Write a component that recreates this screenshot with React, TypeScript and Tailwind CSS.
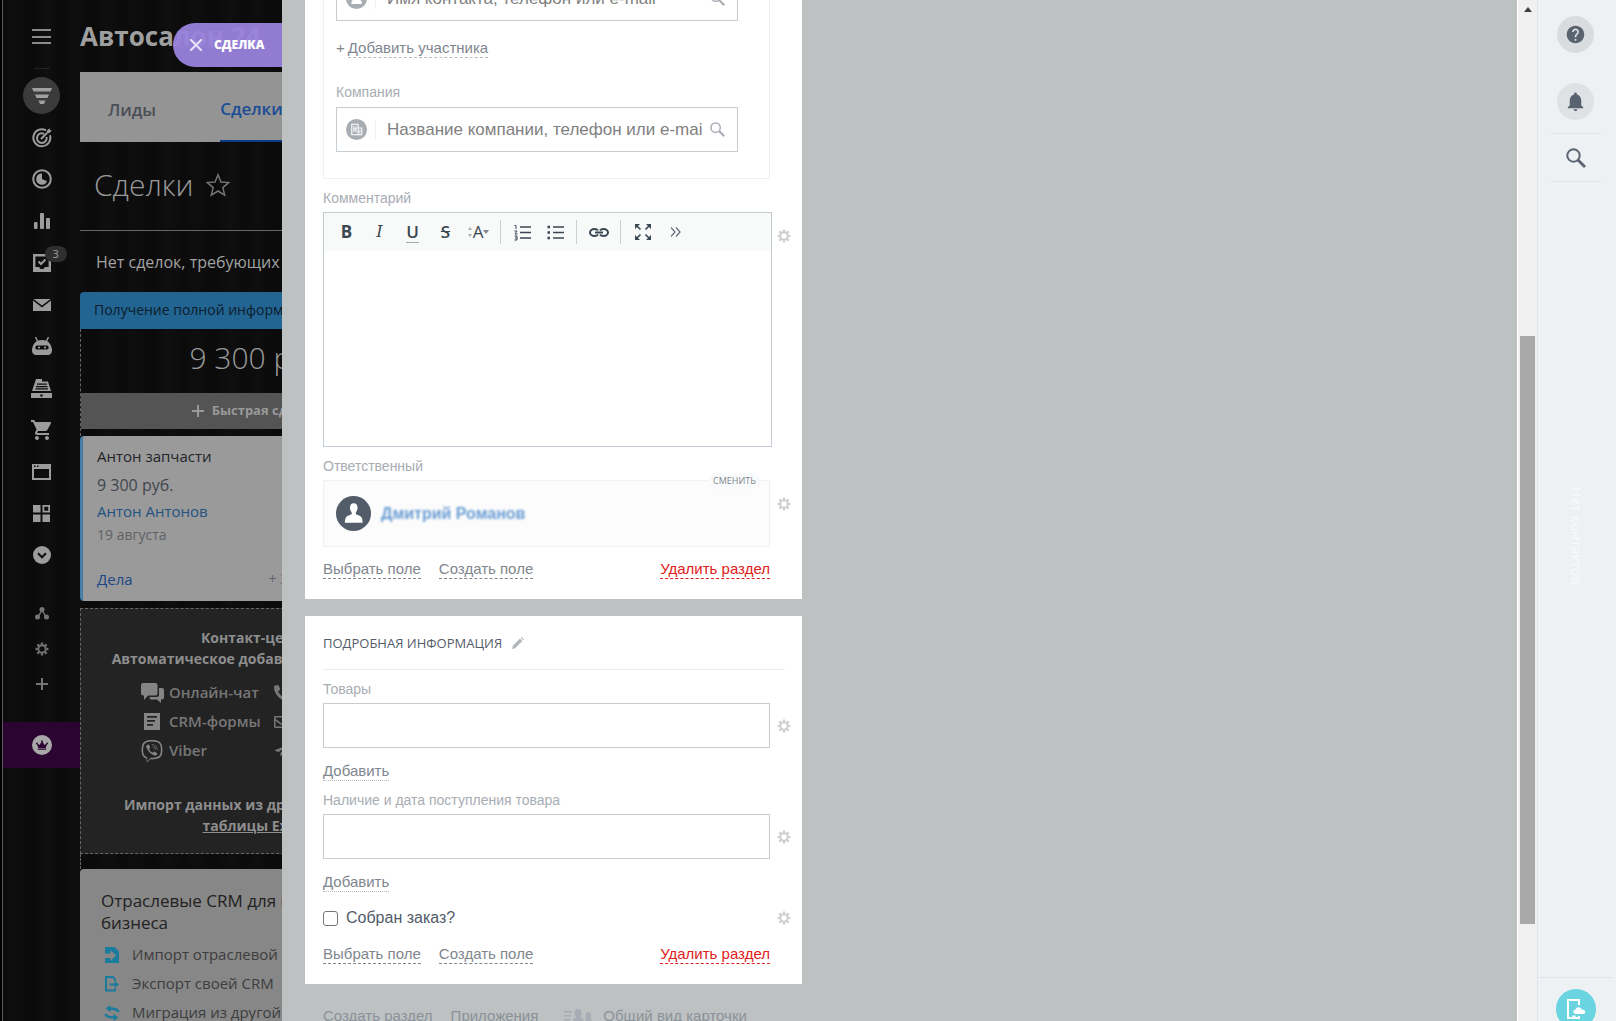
import type { ReactNode } from 'react';
import { FaCrown, FaPhone, FaRegEnvelope, FaTelegramPlane, FaViber } from 'react-icons/fa';
import { MdHelp, MdNotifications, MdShoppingCart } from 'react-icons/md';

type IconProps = {
    className?: string;
};

function Gear({ className }: IconProps) {
    return (
        <svg viewBox="0 0 16 16" className={className} fill="none" stroke="currentColor">
            <circle cx="8" cy="8" r="4.2" strokeWidth="2.2" />
            {[0, 45, 90, 135, 180, 225, 270, 315].map((deg) => (
                <path key={deg} d="M8 3V0.6" strokeWidth="2.6" transform={`rotate(${deg} 8 8)`} />
            ))}
        </svg>
    );
}

function SearchIcon({ className }: IconProps) {
    return (
        <svg viewBox="0 0 20 20" className={className} fill="none" stroke="currentColor">
            <circle cx="7.5" cy="7.5" r="6.2" strokeWidth="2" />
            <path d="M12 12l7 7" strokeWidth="2.8" />
        </svg>
    );
}

function Person({ className }: IconProps) {
    return (
        <svg viewBox="0 0 36 36" className={className}>
            <circle cx="18" cy="18" r="18" fill="currentColor" />
            <path
                d="M18.3 7.5c2.6 0 3.9 1.8 3.9 4.2 0 2.4-.9 4-1.8 5v2.100c3.700 1.200 6 2.400 6.500 4.600l.5 4.200H9l.6-4.200c.5-2.200 2.800-3.400 6.500-4.600v-2.100c-.9-1-1.700-2.600-1.700-5 0-2.400 1.300-4.200 3.900-4.200z"
                fill="#fff"
            />
        </svg>
    );
}

function CompanyIcon({ className }: IconProps) {
    return (
        <svg viewBox="0 0 20 20" className={className} fill="none" stroke="#fff">
            <circle cx="10" cy="10" r="10" fill="currentColor" stroke="none" />
            <path d="M5.500 15V5h6v10zM11.500 8.500h3.500V15h-10M7.500 7v5.500M9.500 7v5.500M7.500 9.500h2M13.200 10.500v3" />
        </svg>
    );
}

const menuIcons: { name: string; icon: ReactNode }[] = [
    {
        name: 'CRM',
        icon: (
            <span className="flex size-[37px] items-center justify-center rounded-full bg-[#3b3b3b]">
                <svg viewBox="0 0 20 16" className="h-4 w-5" fill="#a0a0a0">
                    <path d="M0 0h20l-1.500 3.500h-17zM3 6.500h14l-1.500 3.500h-11zM6.500 12.500h7L12 16H8z" />
                </svg>
            </span>
        ),
    },
    {
        name: 'Задачи',
        icon: (
            <svg viewBox="0 0 20 20" className="size-5" fill="none" stroke="currentColor" strokeWidth="2">
                <path d="M14 2.300a8.500 8.500 0 1 0 4 5M12 5.800a4.800 4.800 0 1 0 2.500 3.200M9 11l6-6" />
                <path d="M14.500 5.500l.5-3 2.500-2.200.5 1.700 1.700.5-2.200 2.500z" fill="currentColor" stroke="none" />
            </svg>
        ),
    },
    {
        name: 'Время',
        icon: (
            <svg viewBox="0 0 20 20" className="size-5" fill="none" stroke="currentColor" strokeWidth="2">
                <circle cx="10" cy="10" r="8.800" />
                <path d="M10 4.500V10l5 2.200A5.600 5.600 0 1 1 10 4.500z" fill="currentColor" stroke="none" />
            </svg>
        ),
    },
    {
        name: 'Аналитика',
        icon: (
            <svg viewBox="0 0 16 16" className="size-4" fill="currentColor">
                <rect y="9" width="3.500" height="7" rx="1" />
                <rect x="6" width="4" height="16" rx="1" />
                <rect x="12" y="5" width="4" height="11" rx="1" />
            </svg>
        ),
    },
    {
        name: 'Дела',
        icon: (
            <span className="relative">
                <svg viewBox="0 0 18 18" className="size-[18px]" fill="none" stroke="currentColor">
                    <path d="M1.200 1.200h15.600v15.600H1.200z" strokeWidth="2.400" />
                    <path d="M2 13h4l1.500 2h3L12 13h4v4H2z" fill="currentColor" stroke="none" />
                    <path d="M5.500 7.500l2.500 2.500 4.500-4.500" strokeWidth="2" />
                </svg>
                <span className="absolute -top-2 left-3 rounded-full bg-[#2f2f2f] px-2 font-['Open_Sans',sans-serif] text-[11px] leading-4 text-[#a0a0a0]">
                    3
                </span>
            </span>
        ),
    },
    {
        name: 'Почта',
        icon: (
            <svg viewBox="0 0 18 12" className="h-3 w-[18px]" fill="currentColor">
                <path d="M.5 0h17L9 6.500zM0 1.500l9 7 9-7V12H0z" />
            </svg>
        ),
    },
    {
        name: 'Роботы',
        icon: (
            <svg viewBox="0 0 20 18" className="h-[18px] w-5" fill="currentColor">
                <path d="M3.500 0l2 4M16.500 0l-2 4" stroke="currentColor" strokeWidth="1.400" />
                <path
                    d="M10 3c5.500 0 9 3 10 9.500.2 3.500-1.500 5.500-4 5.500H4c-2.500 0-4.200-2-4-5.500C1 6 4.500 3 10 3zM5 8.500c-2.200 0-2.200 4 0 4h10c2.200 0 2.200-4 0-4z"
                    fillRule="evenodd"
                />
                <circle cx="7" cy="10.500" r="1.100" />
                <circle cx="13" cy="10.500" r="1.100" />
            </svg>
        ),
    },
    {
        name: 'Касса',
        icon: (
            <svg viewBox="0 0 21 20" className="h-5 w-[21px]" fill="currentColor">
                <path
                    d="M5 1h6v2.500h6L20 13H1zM6 5.500v1.300h10V5.500zM5 8v1.200h11.500V8zM4.500 10.300v1.200H17v-1.200zM0 15h21v5H0zm9.200 1.500v2h2.500v-2z"
                    fillRule="evenodd"
                />
            </svg>
        ),
    },
    { name: 'Магазин', icon: <MdShoppingCart className="size-6" /> },
    {
        name: 'Сайты',
        icon: (
            <svg viewBox="0 0 19 16" className="h-4 w-[19px]" fill="currentColor">
                <path d="M0 0h19v16H0zM2 5v9h15V5zM2 1.500V3h1.500V1.500zM5 1.500V3h1.500V1.500z" fillRule="evenodd" />
            </svg>
        ),
    },
    {
        name: 'Маркет',
        icon: (
            <svg viewBox="0 0 17 17" className="size-[17px]" fill="currentColor">
                <path d="M0 0h7.500v7.500H0zM9.500 0H17v7.500H9.500zM11.300 1.800v3.900h3.900V1.800zM0 9.500h7.500V17H0zM9.500 9.500H17V17H9.500z" fillRule="evenodd" />
            </svg>
        ),
    },
    {
        name: 'Ещё',
        icon: (
            <svg viewBox="0 0 18 18" className="size-[18px]">
                <circle cx="9" cy="9" r="9" fill="currentColor" />
                <path d="M5 7.200l4 4 4-4" fill="none" stroke="#111" strokeWidth="2.200" />
            </svg>
        ),
    },
];

function Sidebar() {
    return (
        <nav className="flex w-[77px] shrink-0 flex-col items-center text-[#9c9c9c]">
            <button aria-label="Меню" className="mt-[29px] flex h-[15px] w-[19px] flex-col justify-between">
                <span className="h-[2px] w-full bg-[#8a8a8a]" />
                <span className="h-[2px] w-full bg-[#8a8a8a]" />
                <span className="h-[2px] w-full bg-[#8a8a8a]" />
            </button>
            <span className="mt-6 h-px w-4 bg-[#242424]" />
            <div className="mt-[6px] grid h-[501px] shrink-0 auto-rows-fr">
                {menuIcons.map((item) => (
                    <button key={item.name} aria-label={item.name} className="flex items-center justify-center">
                        {item.icon}
                    </button>
                ))}
            </div>
            <div className="mt-5 flex flex-col items-center text-[#757575]">
                <button aria-label="Карта сайта" className="flex h-[35px] items-center">
                    <svg viewBox="0 0 14 13" className="h-[13px] w-[14px]" fill="currentColor">
                        <path d="M7 3L3 10M7 3l4 7" stroke="currentColor" strokeWidth="1.500" />
                        <circle cx="7" cy="2.500" r="2.500" />
                        <circle cx="2.500" cy="10" r="2.500" />
                        <circle cx="11.500" cy="10" r="2.500" />
                    </svg>
                </button>
                <button aria-label="Настройки" className="flex h-[35px] items-center">
                    <Gear className="size-[14px]" />
                </button>
                <button aria-label="Добавить пункт" className="flex h-[35px] items-center">
                    <svg viewBox="0 0 12 12" className="size-3" stroke="currentColor" strokeWidth="2">
                        <path d="M6 0v12M0 6h12" />
                    </svg>
                </button>
            </div>
            <button aria-label="Тариф" className="mt-[21px] flex h-[46px] w-full items-center justify-center bg-[#2c0432]">
                <span className="flex size-5 items-center justify-center rounded-full bg-[#a8a8a8]">
                    <FaCrown className="size-3 text-[#2c0432]" />
                </span>
            </button>
        </nav>
    );
}

function Channel({ icon, label, next }: { icon: ReactNode; label: string; next: ReactNode }) {
    return (
        <li className="flex h-[29px] items-center pl-[60px]">
            <span className="flex w-7 items-center text-[#858585]">{icon}</span>
            <span className="w-[105px]">{label}</span>
            {next}
        </li>
    );
}

function Deals() {
    return (
        <div className="flex w-[202px] shrink-0 flex-col overflow-hidden font-['Open_Sans','Noto_Sans',sans-serif] whitespace-nowrap">
            <h1 className="mt-[18px] h-9 shrink-0 text-[26px] leading-9 font-bold text-[#9f9f9f]">Автосалон 24</h1>
            <div className="mt-[18px] flex h-[70px] shrink-0 items-stretch gap-16 bg-[#949494] pl-7 text-[17px] font-semibold">
                <a href="#leads" className="flex items-center pt-[6px] text-[#4a4e56]">
                    Лиды
                </a>
                <a href="#deals" className="flex items-center border-b-2 border-[#0c3c88] pt-[6px] pr-4 text-[#1b4d96]">
                    Сделки
                </a>
            </div>
            <div className="mt-[23px] flex h-10 shrink-0 items-center gap-3 pl-[14px] text-[#9a9a9a]">
                <h2 className="text-[30px] leading-10 font-light">Сделки</h2>
                <svg viewBox="0 0 24 24" className="size-6" fill="none" stroke="#747474" strokeWidth="1.500">
                    <path d="M12 1.800l3 7.200 7.700.6-5.900 5 1.900 7.500L12 18l-6.700 4.100 1.900-7.500-5.900-5L9 9z" />
                </svg>
            </div>
            <p className="mt-[25px] h-[62px] shrink-0 border-t border-[#666] pt-[19px] pl-4 text-[16px] leading-6 text-[#a2a2a2]">
                Нет сделок, требующих внимания
            </p>
            <div className="w-[350px]">
                <div className="h-[37px] rounded-t bg-[#226593] pl-[14px] text-[14px] leading-9 font-medium text-[#0c1c2a]">Получение полной информации</div>
                <div className="border-l border-dashed border-[#666]">
                    <p className="h-16 pl-2 text-center text-[30px] leading-[58px] font-light text-[#9a9a9a]">9 300 руб.</p>
                    <button className="flex h-9 w-full items-center justify-center gap-2 bg-[#545454] text-[13px] font-bold text-[#999]">
                        <svg viewBox="0 0 12 12" className="size-3" stroke="currentColor" strokeWidth="2">
                            <path d="M6 0v12M0 6h12" />
                        </svg>
                        Быстрая сделка
                    </button>
                    <div className="h-[7px]" />
                </div>
                <article className="h-[165px] rounded-l-sm border-l-[3px] border-[#457fa8] bg-[#9a9a9a] pt-2 pl-[14px]">
                    <p className="text-[15px] leading-6 font-medium text-[#232529]">Антон запчасти</p>
                    <p className="mt-[3px] text-[16px] leading-7 text-[#42464d]">9 300 руб.</p>
                    <a href="#contact" className="block text-[15px] leading-6 text-[#22527f]">
                        Антон Антонов
                    </a>
                    <p className="text-[14px] leading-6 text-[#5f6266]">19 августа</p>
                    <div className="mt-5 flex items-center gap-[136px] leading-6">
                        <a href="#todo" className="text-[15px] text-[#1b4687]">
                            Дела
                        </a>
                        <span className="text-[14px] text-[#5f6266]">+ Запланировать</span>
                    </div>
                </article>
                <div className="h-[7px]" />
                <section className="h-[246px] border border-dashed border-[#666] bg-[#232323] pt-[18px] text-[14px] font-bold text-[#8e8e8e]">
                    <p className="text-center leading-[21px]">
                        Контакт-центр
                        <br />
                        Автоматическое добавление лидов из
                    </p>
                    <ul className="mt-[9px] text-[15px] font-semibold text-[#777]">
                        <Channel
                            icon={
                                <svg viewBox="0 0 23 20" className="h-5 w-[23px]" fill="currentColor">
                                    <path d="M2 0h12.500a2 2 0 0 1 2 2v8.500a2 2 0 0 1-2 2H7L3 17v-4.500H2a2 2 0 0 1-2-2V2a2 2 0 0 1 2-2z" />
                                    <path d="M18 5h3a2 2 0 0 1 2 2v7.500a2 2 0 0 1-2 2h-1V20l-4-3.500h-5.500a1.500 1.500 0 0 1-1.500-2.500h6.500a2.500 2.500 0 0 0 2.500-2.500z" />
                                </svg>
                            }
                            label="Онлайн-чат"
                            next={<FaPhone className="size-4 -scale-x-100" />}
                        />
                        <Channel
                            icon={
                                <svg viewBox="0 0 16 17" className="ml-[3px] h-[17px] w-4" fill="currentColor">
                                    <path d="M0 0h16v17H0zM3 3v1.800h10V3zM3 7v1.800h8V7zM3 11v1.800h6V11z" fillRule="evenodd" />
                                </svg>
                            }
                            label="CRM-формы"
                            next={<FaRegEnvelope className="size-4" />}
                        />
                        <Channel icon={<FaViber className="size-[22px]" />} label="Viber" next={<FaTelegramPlane className="size-4" />} />
                    </ul>
                    <p className="mt-[29px] text-center leading-[21px]">
                        Импорт данных из другой CRM или
                        <br />
                        <a href="#excel" className="underline">
                            таблицы Excel
                        </a>
                    </p>
                </section>
                <div className="h-[15px] border-l border-dashed border-[#666]" />
                <section className="h-[200px] rounded-t bg-[#878787] pt-[21px] pl-[21px]">
                    <h3 className="text-[17px] leading-[22px] text-[#222]">
                        Отраслевые CRM для вашего
                        <br />
                        бизнеса
                    </h3>
                    <ul className="mt-[6px] text-[15px] text-[#3d3d3d]">
                        <li className="flex h-[29px] items-center gap-[9px]">
                            <svg viewBox="0 0 14 16" className="mx-1 h-4 w-[14px] text-[#197c9c]" fill="currentColor">
                                <path d="M0 0h9.500L14 4.500V16H0v-5h5.500v3L11 8 5.500 3.500V6.500H0z" />
                            </svg>
                            Импорт отраслевой CRM
                        </li>
                        <li className="flex h-[29px] items-center gap-[9px]">
                            <svg viewBox="0 0 14 16" className="mx-1 h-4 w-[14px] text-[#197c9c]" fill="none" stroke="currentColor" strokeWidth="2">
                                <path d="M10 5V3.500L8 1H1v13.500h9V12M4.500 8.500H11" />
                                <path d="M9.500 5l4.500 3.500-4.500 3.500z" fill="currentColor" stroke="none" />
                            </svg>
                            Экспорт своей CRM
                        </li>
                        <li className="flex h-[29px] items-center gap-[9px]">
                            <svg viewBox="0 0 16 16" className="mx-[3px] size-4 text-[#197c9c]" fill="none" stroke="currentColor" strokeWidth="2.400">
                                <path d="M14.500 7C14 4.500 11.500 3.500 5 3.500M1.500 9C2 11.500 4.500 12.500 11 12.500" />
                                <path d="M6.500 0v7L1.500 3.500zM9.500 9v7l5-3.500z" fill="currentColor" stroke="none" />
                            </svg>
                            Миграция из другой CRM
                        </li>
                    </ul>
                </section>
            </div>
        </div>
    );
}

function FieldGear() {
    return (
        <button aria-label="Настройки поля" className="shrink-0 text-[#cbcdcf]">
            <Gear className="size-[14px]" />
        </button>
    );
}

function EntityInput({ id, icon, placeholder, label }: { id: string; icon: ReactNode; placeholder: string; label: string }) {
    return (
        <div className="flex h-[45px] items-center border border-[#c6cdd3] pr-3 pl-[9px] text-[#a8adb4]">
            {icon}
            <span className="ml-2 h-5 border-l border-[#eef2f4]" />
            <input
                id={id}
                aria-label={label}
                placeholder={placeholder}
                className="ml-[11px] min-w-0 flex-1 text-[17px] leading-6 text-[#535c69] outline-none placeholder:text-[#808080]"
            />
            <SearchIcon className="ml-2 size-[15px] shrink-0" />
        </div>
    );
}

function SectionLinks() {
    return (
        <div className="flex gap-[18px] pr-[21px] text-[15px] leading-[18px] text-[#80868e]">
            <a href="#select" className="border-b border-dashed border-[#80868e]">
                Выбрать поле
            </a>
            <a href="#create" className="border-b border-dashed border-[#80868e]">
                Создать поле
            </a>
            <a href="#remove" className="ml-auto border-b border-dashed border-[#e02020] text-[#e02020]">
                Удалить раздел
            </a>
        </div>
    );
}

function MultiField({ id, label }: { id: string; label: string }) {
    return (
        <div className="mt-[11px]">
            <label htmlFor={id} className="block text-[14px] leading-4 text-[#a8adb4]">
                {label}
            </label>
            <div className="mt-[6px] flex items-center gap-[7px]">
                <input id={id} className="h-[45px] min-w-0 flex-1 border border-[#c9ccd3] px-3 text-[17px] outline-none" />
                <FieldGear />
            </div>
            <button className="mt-[14px] block border-b border-dotted border-[#b8bcc2] text-[15px] leading-[18px] text-[#80868e]">Добавить</button>
        </div>
    );
}

function Divider() {
    return <span className="h-6 w-px bg-[#c9d0d6]" />;
}

function EditorToolbar() {
    return (
        <div className="flex h-[38px] items-center bg-[#f8faf9] pl-[6px] font-['Open_Sans','Noto_Sans',sans-serif] text-[17px] leading-6 text-[#3a4652]">
            <button className="w-[33px] font-bold">B</button>
            <button className="w-[33px] font-['DejaVu_Serif',serif] text-[16px] italic">I</button>
            <button className="flex w-[33px] justify-center">
                <span className="h-[22px] border-b border-[#a5abb2] leading-[22px] font-semibold">U</span>
            </button>
            <button className="w-[33px] font-semibold line-through">S</button>
            <button className="mr-[5px] flex w-[33px] items-center justify-center">
                <svg viewBox="0 0 4 10" className="mr-px h-[10px] w-1" fill="#a8adb4">
                    <path d="M0 3l2-3 2 3zM0 7l2 3 2-3z" />
                </svg>
                A
                <svg viewBox="0 0 6 4" className="h-1 w-[6px]" fill="#80868e">
                    <path d="M0 0h6L3 4z" />
                </svg>
            </button>
            <Divider />
            <button aria-label="Нумерованный список" className="ml-[5px] flex w-[33px] justify-center">
                <svg viewBox="0 0 17 17" className="size-[17px]" fill="none" stroke="currentColor">
                    <path d="M6 3h11M6 8.500h11M6 14h11" strokeWidth="1.400" />
                    <path d="M.5 1.500H2V5M.5 7H3L1 10h2.500M.5 12H3v4H.5M1 14h2" />
                </svg>
            </button>
            <button aria-label="Маркированный список" className="mr-1 flex w-[33px] justify-center">
                <svg viewBox="0 0 17 17" className="size-[17px]" fill="none" stroke="currentColor">
                    <path d="M6 3h11M6 8.500h11M6 14h11" strokeWidth="1.400" />
                    <path d="M.5 3h2.500M.5 8.500h2.500M.5 14h2.500" strokeWidth="2.400" />
                </svg>
            </button>
            <Divider />
            <button aria-label="Ссылка" className="mx-[5px] flex w-[33px] justify-center">
                <svg viewBox="0 0 20 9" className="h-[9px] w-5" fill="none" stroke="currentColor" strokeWidth="2">
                    <path d="M9 2.500C8.300 1.500 7 1 5.500 1 3 1 1 2.500 1 4.500S3 8 5.500 8C7 8 8.300 7.500 9 6.500M11 2.500C11.700 1.500 13 1 14.500 1 17 1 19 2.500 19 4.500S17 8 14.500 8c-1.500 0-2.800-.5-3.500-1.500M6 4.500h8" />
                </svg>
            </button>
            <Divider />
            <button aria-label="Развернуть" className="ml-[5px] flex w-[33px] justify-center">
                <svg viewBox="0 0 16 16" className="size-4" fill="currentColor" stroke="currentColor">
                    <path d="M0 0h5L0 5zM16 0v5l-5-5zM0 16v-5l5 5zM16 16h-5l5-5z" stroke="none" />
                    <path d="M2 2l3.500 3.500M14 2l-3.500 3.500M2 14l3.500-3.500M14 14l-3.500-3.500" strokeWidth="1.600" />
                </svg>
            </button>
            <button aria-label="Ещё" className="flex w-[33px] justify-center">
                <svg viewBox="0 0 11 10" className="h-[10px] w-[11px]" fill="none" stroke="#6a737d" strokeWidth="1.300">
                    <path d="M1 .5L5 5 1 9.500M6 .5L10 5 6 9.500" />
                </svg>
            </button>
        </div>
    );
}

function DealCard() {
    return (
        <main className="flex min-w-0 flex-1 flex-col overflow-hidden bg-[#bdc1c2] pl-[23px] font-['Liberation_Sans',Arial,sans-serif]">
            <section className="-mt-6 w-full max-w-[497px] shrink-0 bg-white pr-[11px] pb-5 pl-[18px]">
                <div className="mr-[21px] border-x border-b border-[#eef0f4] pr-[31px] pb-[26px] pl-3">
                    <EntityInput
                        id="contact"
                        label="Контакт"
                        icon={<Person className="size-[21px] text-[#a8adb4]" />}
                        placeholder="Имя контакта, телефон или e-mail"
                    />
                    <button className="mt-[18px] flex gap-[3px] text-[15px] leading-[18px] text-[#80868e]">
                        +<span className="border-b border-dashed border-[#b8bcc2]">Добавить участника</span>
                    </button>
                    <label htmlFor="company" className="mt-[26px] mb-[7px] block text-[14px] leading-4 text-[#a8adb4]">
                        Компания
                    </label>
                    <EntityInput
                        id="company"
                        label="Компания"
                        icon={<CompanyIcon className="size-[21px] text-[#a8adb4]" />}
                        placeholder="Название компании, телефон или e-mail"
                    />
                </div>

                <label htmlFor="comment" className="mt-[11px] block text-[14px] leading-4 text-[#a8adb4]">
                    Комментарий
                </label>
                <div className="mt-[6px] flex gap-[5px]">
                    <div className="h-[235px] flex-1 border border-[#c3ccd5]">
                        <EditorToolbar />
                        <textarea id="comment" className="block h-[190px] w-full resize-none p-3 text-[15px] outline-none" />
                    </div>
                    <div className="pt-[14px]">
                        <FieldGear />
                    </div>
                </div>

                <p className="mt-[11px] text-[14px] leading-4 text-[#a8adb4]">Ответственный</p>
                <div className="mt-[6px] mb-[13px] flex gap-[7px]">
                    <div className="relative flex h-[67px] flex-1 items-center gap-[10px] border border-[#f0f1f2] bg-[#fcfcfc] pl-3">
                        <Person className="size-[35px] text-[#535c69]" />
                        <a href="#user" className="text-[16px] font-bold text-[#6a9dd4] blur-[1px]">
                            Дмитрий Романов
                        </a>
                        <button className="absolute -top-2 right-2 rounded-full bg-[#f8fafb] px-[5px] font-['Open_Sans','Noto_Sans',sans-serif] text-[9px] leading-4 text-[#80868e]">
                            СМЕНИТЬ
                        </button>
                    </div>
                    <div className="pt-[14px]">
                        <FieldGear />
                    </div>
                </div>
                <SectionLinks />
            </section>

            <section className="mt-[17px] w-full max-w-[497px] shrink-0 bg-white pt-[17px] pr-[11px] pb-5 pl-[18px]">
                <div className="mr-[6px] flex items-center gap-[10px] border-b border-[#e9eef1] pb-4">
                    <h2 className="font-['Open_Sans','Noto_Sans',sans-serif] text-[13px] leading-5 font-medium text-[#535c69]">ПОДРОБНАЯ ИНФОРМАЦИЯ</h2>
                    <button aria-label="Переименовать раздел">
                        <svg viewBox="0 0 12 12" className="size-3" fill="#b4b8bd">
                            <path d="M0 12l.8-3.200L8 1.600l2.400 2.400-7.200 7.200zM8.800.8L9.600 0 12 2.400l-.8.8z" />
                        </svg>
                    </button>
                </div>
                <MultiField id="goods" label="Товары" />
                <MultiField id="stock" label="Наличие и дата поступления товара" />
                <div className="mt-4 mb-[17px] flex h-5 items-center justify-between">
                    <label className="flex items-center gap-2 text-[16px] leading-5 text-[#535c69]">
                        <input type="checkbox" className="size-[15px] appearance-none rounded-[3px] border border-[#767676] bg-white" />
                        Собран заказ?
                    </label>
                    <FieldGear />
                </div>
                <SectionLinks />
            </section>

            <div className="mt-[23px] flex gap-[18px] pl-[18px] text-[15px] leading-[18px] text-[#8b9198]">
                <a href="#section">Создать раздел</a>
                <a href="#apps">Приложения</a>
                <button className="ml-2 flex items-center gap-[11px]">
                    <svg viewBox="0 0 28 14" className="h-[14px] w-7" fill="#a6abb4">
                        <path d="M0 2h8v1.500H0zM0 6h7v1.500H0zM0 10h6v1.500H0z" />
                        <path d="M14 0c2 0 3.500 1.500 3.500 4S16.500 8 16 8.500c2.500.5 3.500 2 4 5.500H8.500c.3-3.500 1.500-5 4-5.500-.6-.5-2-2-2-4.500S12 0 14 0z" />
                        <path d="M24.500 3c1.500 0 2.500 1 2.500 3s-.7 2.500-1 3c1.300.5 2 2 2 5h-6c0-2-.5-3.500-1-4.500.5-.2 1-.3 1.500-.5-.5-.5-1-1.500-1-3s1.500-3 3-3z" />
                    </svg>
                    Общий вид карточки
                </button>
            </div>
        </main>
    );
}

function RightRail() {
    return (
        <aside className="flex w-[79px] shrink-0 flex-col items-center border-l border-[#e0e4ee] bg-[#edf1f4] pr-[3px] text-[#59636f]">
            <button aria-label="Помощь" className="mt-4 flex size-[37px] shrink-0 items-center justify-center rounded-full bg-[#d9dcdf]">
                <MdHelp className="size-[21px]" />
            </button>
            <button aria-label="Уведомления" className="mt-[30px] flex size-[37px] shrink-0 items-center justify-center rounded-full bg-[#dfe2e5]">
                <MdNotifications className="size-[23px]" />
            </button>
            <button aria-label="Поиск" className="mt-[13px] flex h-[49px] w-[50px] shrink-0 items-center justify-center border-y border-[#e1e5e8]">
                <SearchIcon className="size-5" />
            </button>
            <div className="flex flex-1 items-center">
                <span className="pb-[88px] font-['Open_Sans','Noto_Sans',sans-serif] text-[14px] leading-5 text-[#f8fafb] [writing-mode:vertical-rl]">
                    Нет контактов
                </span>
            </div>
            <div className="flex h-11 w-full shrink-0 justify-center border-t border-[#dde4ea] pt-[11px]">
                <button aria-label="Приложения" className="flex size-10 items-center justify-center rounded-full bg-[#6bd4e1]">
                    <svg viewBox="0 0 20 20" className="size-5" fill="none" stroke="#fff" strokeWidth="2">
                        <path d="M13 6V1H2v18h11v-2" />
                        <path d="M6.500 17.500h3" />
                        <path d="M10 15c-3.500 0-3.500-4-.5-4.200C10 7.500 15 7.500 15.500 10.500c4.500-.5 5 4.500 1.500 4.500z" fill="#fff" stroke="none" />
                    </svg>
                </button>
            </div>
        </aside>
    );
}

export default function App() {
    return (
        <div className="relative flex h-screen overflow-hidden bg-[#0c0c0c] bg-[repeating-linear-gradient(90deg,#0b0b0b_0px,#0e0e0e_13px,#0a0a0a_31px,#0f0f0f_47px,#0b0b0b_61px)]">
            <div className="w-[3px] shrink-0 border-r border-[#5a5a5a] bg-black" />
            <Sidebar />
            <Deals />
            <button className="absolute top-[23px] left-[173px] flex h-11 w-[109px] items-center gap-3 rounded-l-full bg-[#9a83dd]/95 pl-[17px] font-['Open_Sans','Noto_Sans',sans-serif] text-[12px] font-extrabold text-white">
                <svg viewBox="0 0 12 12" className="size-3" stroke="#e8e2f8" strokeWidth="2">
                    <path d="M0 0l12 12M12 0L0 12" />
                </svg>
                СДЕЛКА
            </button>
            <DealCard />
            <div className="flex w-5 shrink-0 flex-col items-center border-l border-white bg-[#f0f0f0]">
                <svg viewBox="0 0 8 5" className="mt-[7px] h-[5px] w-2" fill="#404040">
                    <path d="M4 0l4 5H0z" />
                </svg>
                <div className="mt-[324px] h-[588px] w-[15px] bg-[#a8a8a8]" />
            </div>
            <RightRail />
        </div>
    );
}
